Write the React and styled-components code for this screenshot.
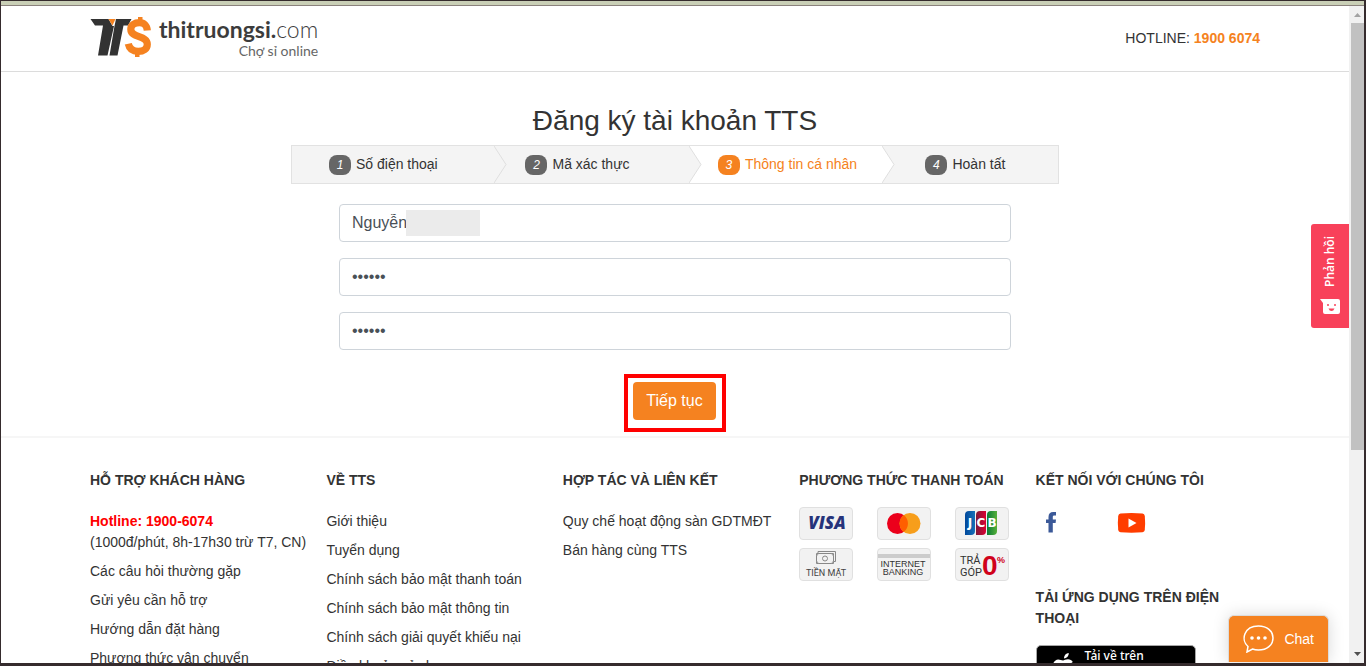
import React from "react";
import styled, { createGlobalStyle } from "styled-components";

const GlobalStyle = createGlobalStyle`
    * {
        box-sizing: border-box;
    }

    body {
        margin: 0;
        color: #333;
        background: #fff;
        font-family: "Liberation Sans", Arial, sans-serif;
        font-size: 14px;
        line-height: 21px;
    }

    a {
        color: inherit;
        text-decoration: none;
    }

    ul {
        list-style: none;
        margin: 0;
        padding: 0;
    }
`;

const Frame = styled.div`
    display: flex;
    flex-direction: column;
    height: 100vh;
    overflow: hidden;
    border: 1px solid #352b2d;
    border-right-width: 2px;
    border-bottom-width: 3px;
`;

const TopStrip = styled.div`
    flex: none;
    height: 5px;
    background: #c9cfb6;
    border-bottom: 1px solid #8b827d;
`;

const Viewport = styled.div`
    position: relative;
    display: flex;
    flex: 1;
    min-height: 0;
`;

const Page = styled.div`
    flex: 1;
    min-width: 0;
    overflow: hidden;
`;

const Container = styled.div`
    max-width: 1200px;
    margin: 0 auto;
    padding: 0 15px;
`;

const StyledHeader = styled.header`
    border-bottom: 1px solid #dcdcdc;

    ${Container} {
        display: flex;
        justify-content: space-between;
        align-items: center;
        height: 65px;
    }
`;

const LogoLink = styled.a`
    display: flex;
    gap: 8px;
    color: #3c3c3c;
    font-family: Lato, "Noto Sans", sans-serif;
`;

const LogoText = styled.span`
    display: flex;
    flex-direction: column;
    align-items: flex-end;
    font-size: 23px;
    font-weight: 300;
    line-height: 24px;

    b {
        font-weight: 700;
    }

    small {
        font-size: 14px;
        font-weight: 400;
        line-height: 20px;
        color: #666;
    }
`;

const Hotline = styled.div`
    b {
        color: #f58220;
    }
`;

const Main = styled.main`
    display: flex;
    flex-direction: column;
    max-width: 768px;
    margin: 0 auto;
    padding: 32px 0 4px;
`;

const Title = styled.h1`
    margin: 0 0 7px;
    font-size: 28px;
    font-weight: 400;
    line-height: 34px;
    text-align: center;
`;

const StepList = styled.ol`
    display: grid;
    grid-template-columns: 203fr 195fr 194fr 176fr;
    list-style: none;
    margin: 0;
    padding: 0;
    border: 1px solid #e2e2e2;
    background: #f4f4f4;
`;

const StepItem = styled.li`
    position: relative;
    display: flex;
    align-items: center;
    gap: 5px;
    height: 37px;
    padding-left: ${(props) => props.$indent}px;
    background: ${(props) => (props.$active ? "#fff" : "#f4f4f4")};
    color: ${(props) => (props.$active ? "#f58220" : "#333")};
`;

const StepNumber = styled.em`
    width: 22px;
    border-radius: 8px;
    background: ${(props) => (props.$active ? "#f58220" : "#666")};
    color: #fff;
    font-size: 12px;
    line-height: 20px;
    text-align: center;
`;

const StepArrow = styled.svg`
    position: absolute;
    top: 0;
    left: 100%;
    z-index: 1;
`;

const Form = styled.form`
    display: flex;
    flex-direction: column;
    gap: 16px;
    padding: 20px 48px 0;
`;

const Field = styled.label`
    position: relative;
    display: block;
`;

const Input = styled.input`
    display: block;
    width: 100%;
    height: 38px;
    padding: 6px 12px;
    border: 1px solid #ced4da;
    border-radius: 4px;
    color: #495057;
    font-family: inherit;
    font-size: 16px;
`;

const Redacted = styled.span`
    position: absolute;
    top: 6px;
    left: 67px;
    width: 74px;
    height: 26px;
    background: #ebebeb;
`;

const SubmitBox = styled.div`
    align-self: center;
    margin-top: 8px;
    padding: 4px 6px 8px 5px;
    border: 4px solid #f00;
`;

const SubmitButton = styled.button`
    display: block;
    height: 38px;
    padding: 0 13px;
    border: 0;
    border-radius: 4px;
    background: #f58220;
    color: #fff;
    font-family: inherit;
    font-size: 16px;
`;

const StyledFooter = styled.footer`
    border-top: 2px solid #f6f6f6;
    padding-top: 32px;
`;

const FooterGrid = styled(Container)`
    display: grid;
    grid-template-columns: repeat(5, 1fr);
    column-gap: 12px;
`;

const FooterTitle = styled.h2`
    margin: 0 0 16px;
    font-size: 14px;
    font-weight: 700;
    line-height: 21px;
`;

const FooterLinks = styled.ul`
    display: flex;
    flex-direction: column;
    gap: 8px;
    padding-top: 4px;
    white-space: nowrap;

    b {
        display: block;
        color: #f00;
    }
`;

const PaymentGrid = styled.div`
    display: grid;
    grid-template-columns: repeat(3, 54px);
    gap: 8px 24px;
`;

const PaymentCard = styled.div`
    height: 33px;
    border: 1px solid #e0e0e0;
    border-radius: 4px;
    background: #f2f2f2;

    svg {
        display: block;
    }
`;

const SocialLinks = styled.div`
    display: flex;
    gap: 48px;
    margin-bottom: 48px;

    svg {
        display: block;
    }
`;

const StoreBadge = styled.a`
    display: flex;
    gap: 8px;
    width: 160px;
    height: 48px;
    padding: 2px 14px;
    border: 1px solid #a6a6a6;
    border-radius: 5px;
    background: #000;
    color: #fff;
    font-family: "Noto Sans", sans-serif;
    font-size: 12px;
    font-weight: 500;
    line-height: 16px;
`;

const Scrollbar = styled.div`
    display: flex;
    flex-direction: column;
    align-items: flex-end;
    width: 15px;
    background: #f1f1f1;

    svg {
        display: block;
    }
`;

const ScrollThumb = styled.div`
    width: 13px;
    height: 65%;
    margin-bottom: auto;
    background: #c1c1c1;
`;

const FeedbackButton = styled.button`
    position: absolute;
    top: 218px;
    right: 15px;
    display: flex;
    flex-direction: column;
    align-items: center;
    gap: 12px;
    width: 38px;
    height: 104px;
    padding: 12px 0;
    border: 0;
    border-radius: 3px 0 0 3px;
    background: #f8415a;
    color: #fff;
    font-family: "Open Sans", sans-serif;
    font-size: 12px;
    font-weight: 600;

    span {
        writing-mode: vertical-rl;
        transform: rotate(180deg);
        line-height: 16px;
    }
`;

const ChatButton = styled.button`
    position: absolute;
    right: 35px;
    bottom: 1px;
    display: flex;
    align-items: center;
    gap: 10px;
    height: 47px;
    padding: 0 14px;
    border: 1px solid #dcdcdc;
    border-bottom: 0;
    border-radius: 6px 6px 0 0;
    background: #f58220;
    box-shadow: 0 0 16px rgba(0, 0, 0, 0.15);
    color: #fff;
    font-family: inherit;
    font-size: 14px;
`;

const steps = [
    { label: "Số điện thoại", indent: 37 },
    { label: "Mã xác thực", indent: 31 },
    { label: "Thông tin cá nhân", indent: 29, active: true },
    { label: "Hoàn tất", indent: 43 },
];

const supportLinks = [
    "Các câu hỏi thường gặp",
    "Gửi yêu cần hỗ trợ",
    "Hướng dẫn đặt hàng",
    "Phương thức vận chuyển",
];

const aboutLinks = [
    "Giới thiệu",
    "Tuyển dụng",
    "Chính sách bảo mật thanh toán",
    "Chính sách bảo mật thông tin",
    "Chính sách giải quyết khiếu nại",
    "Điều khoản sử dụng",
];

const partnerLinks = ["Quy chế hoạt động sàn GDTMĐT", "Bán hàng cùng TTS"];

const LogoMark = () => (
    <svg width="61" height="40" viewBox="0 0 61 40" aria-hidden="true">
        <path d="M0.500 2H18.500L22.500 9L24 9L17.500 38.500H8L13 8.500H5z" fill="#333" />
        <path d="M18.500 2H25.500L22.500 8.500z" fill="#f58220" />
        <path d="M26 2H41.500L38 8.500H33.500L27.500 38.500H19.500L24.500 9z" fill="#333" />
        <path
            d="M57.300 13.500C57 8.500 54 5.700 49.500 5.700c-5 0-8.700 2.500-8.700 6.500 0 9 16.500 6 16.500 15 0 4.800-4 7.200-9 7.200-5.500 0-9-2.700-10-7.600"
            fill="none"
            stroke="#f58220"
            strokeWidth="7.200"
        />
        <path d="M48 0h4.500v5H48zM45 35h4.500v5H45z" fill="#f58220" />
    </svg>
);

const Header = () => {
    return (
        <StyledHeader>
            <Container>
                <LogoLink href="#">
                    <LogoMark />
                    <LogoText>
                        <span><b>thitruongsi.</b>com</span>
                        <small>Chợ sỉ online</small>
                    </LogoText>
                </LogoLink>
                <Hotline>
                    HOTLINE: <b>1900 6074</b>
                </Hotline>
            </Container>
        </StyledHeader>
    );
};

const Steps = () => (
    <StepList>
        {steps.map((step, i) => (
            <StepItem key={step.label} $indent={step.indent} $active={step.active}>
                <StepNumber $active={step.active}>{i + 1}</StepNumber>
                {step.label}
                {i < steps.length - 1 && (
                    <StepArrow width="13" height="37" viewBox="0 0 13 37">
                        <path
                            d="M0 0L12 18.500L0 37"
                            fill={step.active ? "#fff" : "#f4f4f4"}
                            stroke="#dfdfdf"
                        />
                    </StepArrow>
                )}
            </StepItem>
        ))}
    </StepList>
);

const Register = () => {
    return (
        <Main>
            <Title>Đăng ký tài khoản TTS</Title>
            <Steps />
            <Form onSubmit={(e) => e.preventDefault()}>
                <Field>
                    <Input type="text" aria-label="Họ tên" defaultValue="Nguyễn" />
                    <Redacted />
                </Field>
                <Field>
                    <Input type="password" aria-label="Mật khẩu" defaultValue="123456" />
                </Field>
                <Field>
                    <Input type="password" aria-label="Nhập lại mật khẩu" defaultValue="123456" />
                </Field>
                <SubmitBox>
                    <SubmitButton type="submit">Tiếp tục</SubmitButton>
                </SubmitBox>
            </Form>
        </Main>
    );
};

const Payments = () => (
    <PaymentGrid>
        <PaymentCard>
            <svg width="52" height="31" viewBox="0 0 52 31">
                <text x="27" y="21" textAnchor="middle" fontFamily="Open Sans" fontSize="17" fontWeight="800" fontStyle="italic" fill="#26337a">VISA</text>
            </svg>
        </PaymentCard>
        <PaymentCard>
            <svg width="52" height="31" viewBox="0 0 52 31">
                <circle cx="19.500" cy="15.500" r="10.500" fill="#eb001b" />
                <circle cx="32" cy="15.500" r="10.500" fill="#f79e1b" />
                <path d="M25.750 7.100a10.500 10.500 0 0 1 0 16.800a10.500 10.500 0 0 1 0-16.800z" fill="#ff5f00" />
            </svg>
        </PaymentCard>
        <PaymentCard>
            <svg width="52" height="31" viewBox="0 0 52 31">
                <defs>
                    <linearGradient id="jcbBlue"><stop stopColor="#00489b" /><stop offset="1" stopColor="#1670b8" /></linearGradient>
                    <linearGradient id="jcbRed"><stop stopColor="#7d1a38" /><stop offset="1" stopColor="#dc0032" /></linearGradient>
                    <linearGradient id="jcbGreen"><stop stopColor="#0a7a35" /><stop offset="1" stopColor="#56b03a" /></linearGradient>
                </defs>
                <path d="M9 7q0-4 4-4h6v20q0 4-4 4H9z" fill="url(#jcbBlue)" />
                <path d="M20 7q0-4 4-4h6v20q0 4-4 4h-6z" fill="url(#jcbRed)" />
                <path d="M31 7q0-4 4-4h6v20q0 4-4 4h-6z" fill="url(#jcbGreen)" />
                <text x="14 25 36" y="19" textAnchor="middle" fontFamily="DejaVu Sans" fontSize="12" fontWeight="700" fill="#fff">JCB</text>
            </svg>
        </PaymentCard>
        <PaymentCard>
            <svg width="52" height="31" viewBox="0 0 52 31">
                <path d="M18 4.500V2.500H35.500V12.500H33.500M16.500 4.500h17v10h-17z" fill="none" stroke="#888" />
                <circle cx="25" cy="9.500" r="2.500" fill="none" stroke="#888" />
                <path d="M16.500 7l2-2.500M31.500 4.500l2 2.500M16.500 12l2 2.500M31.500 14.500l2-2.500" stroke="#999" />
                <text x="26" y="27" textAnchor="middle" fontFamily="Roboto" fontSize="9" fill="#444">TIỀN MẶT</text>
            </svg>
        </PaymentCard>
        <PaymentCard>
            <svg width="52" height="31" viewBox="0 0 52 31">
                <path d="M0 5h52v4H0z" fill="#ccc" />
                <text x="25" y="18" textAnchor="middle" fontFamily="Liberation Sans" fontSize="9" fill="#333">INTERNET</text>
                <text x="25" y="26" textAnchor="middle" fontFamily="Liberation Sans" fontSize="9" fill="#333">BANKING</text>
            </svg>
        </PaymentCard>
        <PaymentCard>
            <svg width="52" height="31" viewBox="0 0 52 31">
                <text x="4" y="15" fontFamily="Roboto" fontSize="11" fill="#333">TRẢ</text>
                <text x="4" y="27" fontFamily="Roboto" fontSize="11" fill="#333">GÓP</text>
                <text x="26" y="26" fontFamily="Liberation Sans" fontSize="28" fontWeight="700" fill="#d0021b">0</text>
                <text x="41" y="14" fontFamily="Liberation Sans" fontSize="9" fontWeight="700" fill="#d0021b">%</text>
            </svg>
        </PaymentCard>
    </PaymentGrid>
);

const LinkItems = ({ items }) =>
    items.map((item) => (
        <li key={item}>
            <a href="#">{item}</a>
        </li>
    ));

const Footer = () => {
    return (
        <StyledFooter>
            <FooterGrid>
                <div>
                    <FooterTitle>HỖ TRỢ KHÁCH HÀNG</FooterTitle>
                    <FooterLinks>
                        <li>
                            <b>Hotline: 1900-6074</b>
                            (1000đ/phút, 8h-17h30 trừ T7, CN)
                        </li>
                        <LinkItems items={supportLinks} />
                    </FooterLinks>
                </div>
                <div>
                    <FooterTitle>VỀ TTS</FooterTitle>
                    <FooterLinks>
                        <LinkItems items={aboutLinks} />
                    </FooterLinks>
                </div>
                <div>
                    <FooterTitle>HỢP TÁC VÀ LIÊN KẾT</FooterTitle>
                    <FooterLinks>
                        <LinkItems items={partnerLinks} />
                    </FooterLinks>
                </div>
                <div>
                    <FooterTitle>PHƯƠNG THỨC THANH TOÁN</FooterTitle>
                    <Payments />
                </div>
                <div>
                    <FooterTitle>KẾT NỐI VỚI CHÚNG TÔI</FooterTitle>
                    <SocialLinks>
                        <a href="#" aria-label="Facebook">
                            <svg width="32" height="32" viewBox="0 0 32 32">
                                <path d="M12.500 25.500V16H10v-3.500h2.500V10c0-3.300 1.800-4.900 4.700-4.900H20v3.400h-1.700c-1.100 0-1.500.5-1.500 1.500v2.500H20L19.600 16h-2.800v9.500z" fill="#3b5998" />
                            </svg>
                        </a>
                        <a href="#" aria-label="YouTube">
                            <svg width="32" height="32" viewBox="0 0 32 32">
                                <path d="M4.500 6.500q11-1 22 0 2 .3 2.300 2.500.7 7 0 14-.3 2-2.300 2.300-11 .9-22 0Q2.500 25 2.200 23q-.7-7 0-14 .3-2.200 2.300-2.500z" fill="#ff3d00" />
                                <path d="M12.500 11.500v9l8-4.500z" fill="#fff" />
                            </svg>
                        </a>
                    </SocialLinks>
                    <FooterTitle>TẢI ỨNG DỤNG TRÊN ĐIỆN THOẠI</FooterTitle>
                    <StoreBadge href="#">
                        <svg width="26" height="32" viewBox="0 0 26 32">
                            <path d="M13 10.500c-.2-3 2-5.200 4.700-5.500.3 2.800-2 5.400-4.700 5.500zM12 12.500c1.300 0 2.500-1.200 5-1.200 2 0 3.800 1 4.800 2.600-4.200 2.500-3.500 8 .7 9.800-1 2.700-3 5.800-5 5.800s-2.500-1.100-4.800-1.100-3 1.100-4.900 1.100c-3.500 0-9.400-12.200-3.600-16.800 3-2.300 5.600-.2 7.800-.2z" fill="#fff" />
                        </svg>
                        Tải về trên
                    </StoreBadge>
                </div>
            </FooterGrid>
        </StyledFooter>
    );
};

export default function App() {
    return (
        <Frame>
            <GlobalStyle />
            <TopStrip />
            <Viewport>
                <Page>
                    <Header />
                    <Register />
                    <Footer />
                </Page>
                <Scrollbar>
                    <svg width="13" height="17" viewBox="0 0 13 17">
                        <path d="M3 11L6.500 7L10 11z" fill="#a3a3a3" />
                    </svg>
                    <ScrollThumb />
                    <svg width="13" height="17" viewBox="0 0 13 17">
                        <path d="M3 6L6.500 10L10 6z" fill="#505050" />
                    </svg>
                </Scrollbar>
                <FeedbackButton type="button">
                    <span>Phản hồi</span>
                    <svg width="20" height="15" viewBox="0 0 20 15">
                        <path d="M0 0h18q2 0 2 2v11q0 2-2 2H5q-2 0-2-2V4z" fill="#fff" />
                        <circle cx="8" cy="6" r="1" fill="#f8415a" />
                        <circle cx="15" cy="6" r="1" fill="#f8415a" />
                        <path d="M8.500 9.500h6q-1 2.500-3 2.500t-3-2.500z" fill="#f8415a" />
                    </svg>
                </FeedbackButton>
                <ChatButton type="button">
                    <svg width="31" height="28" viewBox="0 0 31 28">
                        <path d="M4 27L5 21.500C-2.500 15 1 1 15.500 1 24 1 30 6 30 13S24 25 15.500 25q-3.500 0-6-1z" fill="none" stroke="#fff" strokeWidth="1.500" />
                        <circle cx="9" cy="13" r="1.800" fill="#fff" />
                        <circle cx="15.500" cy="13" r="1.800" fill="#fff" />
                        <circle cx="22" cy="13" r="1.800" fill="#fff" />
                    </svg>
                    Chat
                </ChatButton>
            </Viewport>
        </Frame>
    );
}
